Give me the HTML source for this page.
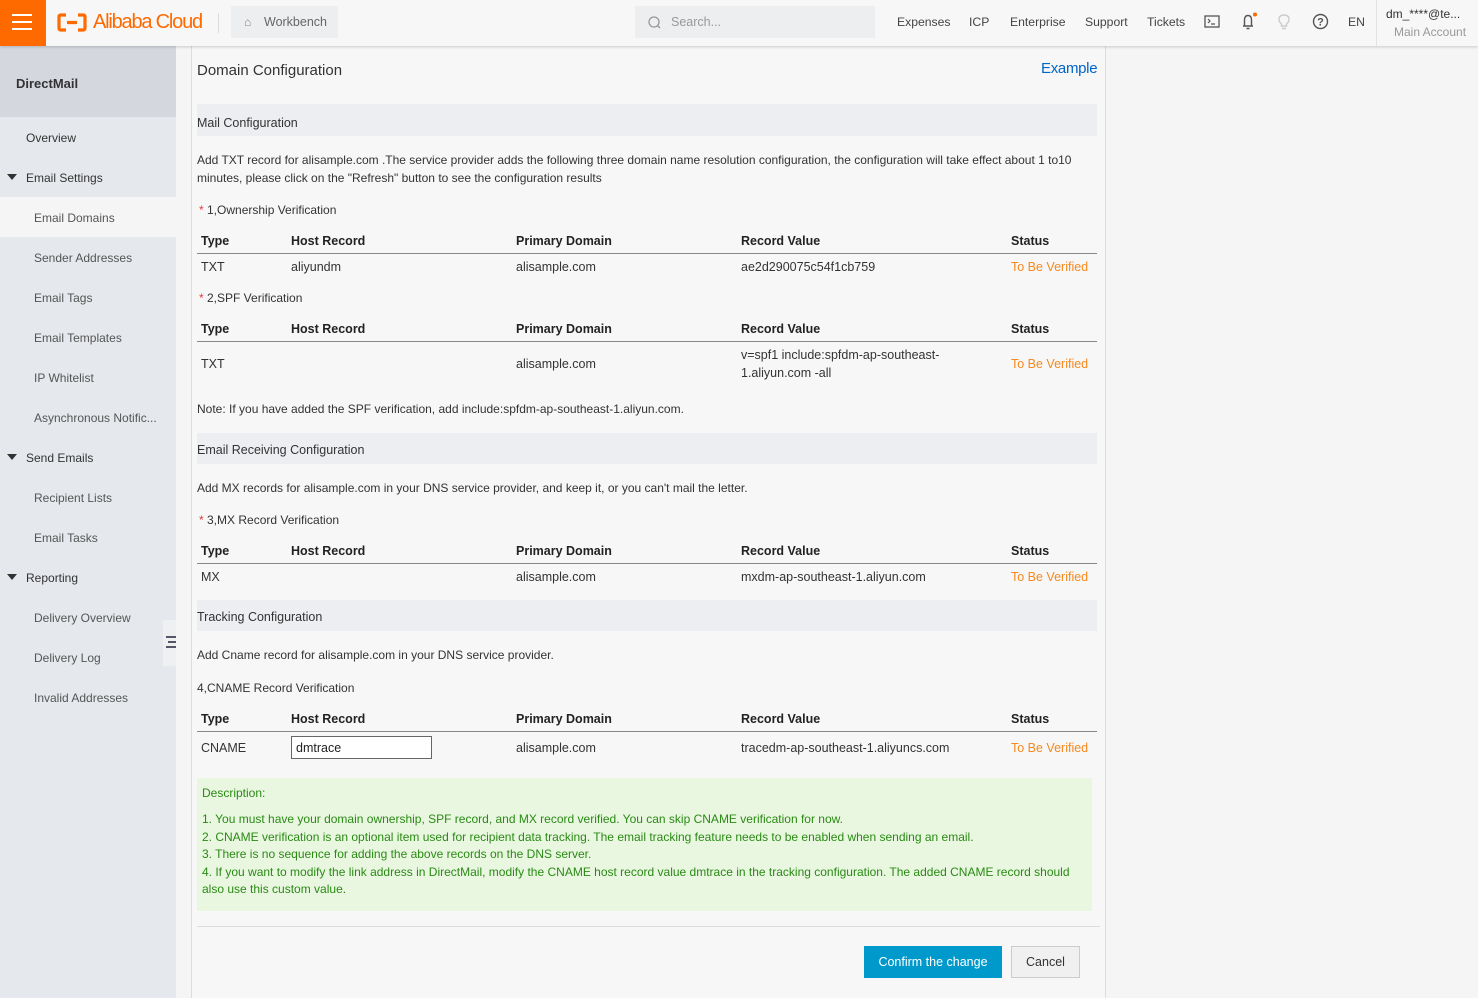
<!DOCTYPE html>
<html><head><meta charset="utf-8"><style>
*{box-sizing:border-box;margin:0;padding:0}
body{width:1478px;height:998px;overflow:hidden;background:#f5f5f5;font-family:"Liberation Sans",Arial,sans-serif;color:#333;position:relative}
.a{position:absolute;white-space:nowrap}
.top{position:absolute;left:0;top:0;width:1478px;height:46px;background:#f7f7f7;box-shadow:0 1px 3px rgba(0,0,0,.18);z-index:2}
.nav{font-size:12.2px;color:#444;top:15px}
.side{position:absolute;left:0;top:46px;width:176px;height:952px;background:#e5e8ec}
.si{position:absolute;left:0;width:176px;height:40px;font-size:12px;line-height:42px;color:#555}
.main{position:absolute;left:191px;top:46px;width:915px;height:952px;background:#f7f7f7;border-left:1px solid #ddd;border-right:1px solid #ddd}
.t{font-size:12px;color:#333;margin-top:1px}
.h{font-size:12.5px;font-weight:bold;color:#222;margin-top:1px}
.band{position:absolute;left:197px;width:900px;background:#eceef1;font-size:12.5px;color:#333;padding-left:0}
.line{position:absolute;left:197px;width:900px;height:1px;background:#888}
.st{color:#f6891f;font-size:12.5px;margin-top:1px}
.red{color:#e4393c}
.tri{position:absolute;left:7px;top:17px;width:0;height:0;border-left:5px solid transparent;border-right:5px solid transparent;border-top:6px solid #333}
</style></head><body>
<div class="top">
  <div class="a" style="left:0;top:0;width:46px;height:46px;background:#ff6a00">
    <div class="a" style="left:12px;top:14px;width:20px;height:2px;background:#fff"></div>
    <div class="a" style="left:12px;top:21px;width:20px;height:2px;background:#fff"></div>
    <div class="a" style="left:12px;top:28px;width:20px;height:2px;background:#fff"></div>
  </div>
  <svg class="a" style="left:57px;top:13px" width="30" height="19" viewBox="0 0 30 19"><path d="M9 2H4Q2 2 2 4V15Q2 17 4 17H9M21 2H26Q28 2 28 4V15Q28 17 26 17H21M10 9.5H20" stroke="#ff6a00" stroke-width="3.2" fill="none"/></svg>
  <div class="a" style="left:93px;top:11px;font-size:20px;color:#ff6a00;letter-spacing:-1.2px;font-weight:500">Alibaba Cloud</div>
  <div class="a" style="left:218px;top:13px;width:1px;height:20px;background:#ddd"></div>
  <div class="a" style="left:231px;top:6px;width:107px;height:32px;background:#eceef0"></div>
  <div class="a" style="left:244px;top:15px;font-size:12px;color:#888">⌂</div>
  <div class="a" style="left:264px;top:15px;font-size:12.5px;color:#666">Workbench</div>
  <div class="a" style="left:635px;top:6px;width:240px;height:32px;background:#eceef0"></div>
  <svg class="a" style="left:647px;top:15px" width="15" height="15"><circle cx="7" cy="7" r="5" stroke="#999" stroke-width="1.3" fill="none"/><path d="M10.5 10.5L13 13" stroke="#999" stroke-width="1.3"/></svg>
  <div class="a" style="left:671px;top:15px;font-size:12.5px;color:#999">Search...</div>
  <div class="a nav" style="left:897px">Expenses</div>
  <div class="a nav" style="left:969px">ICP</div>
  <div class="a nav" style="left:1010px">Enterprise</div>
  <div class="a nav" style="left:1085px">Support</div>
  <div class="a nav" style="left:1147px">Tickets</div>
  <svg class="a" style="left:1204px;top:15px" width="16" height="14"><rect x="1" y="1" width="14" height="11" stroke="#555" stroke-width="1.3" fill="none"/><path d="M4 4L6 6L4 8M7 9H11" stroke="#555" stroke-width="1.2" fill="none"/></svg>
  <svg class="a" style="left:1240px;top:12px" width="18" height="19"><path d="M3 14H13M4.5 14V8Q4.5 3.5 8 3.5Q11.5 3.5 11.5 8V14M6.5 16.5H9.5" stroke="#555" stroke-width="1.4" fill="none"/><circle cx="15" cy="2.5" r="2" fill="#ff6a00"/></svg>
  <svg class="a" style="left:1277px;top:13px" width="14" height="18"><path d="M4.5 11Q2 9 2 6.5Q2 2 7 2Q12 2 12 6.5Q12 9 9.5 11V13H4.5Z M5 15.5H9" stroke="#ccc" stroke-width="1.4" fill="none"/></svg>
  <svg class="a" style="left:1312px;top:13px" width="17" height="17"><circle cx="8.5" cy="8.5" r="7" stroke="#555" stroke-width="1.4" fill="none"/><text x="8.5" y="12.5" font-size="11" font-weight="bold" text-anchor="middle" fill="#555" font-family="Liberation Sans">?</text></svg>
  <div class="a nav" style="left:1348px">EN</div>
  <div class="a" style="left:1376px;top:0;width:1px;height:46px;background:#e3e3e3"></div>
  <div class="a" style="left:1386px;top:7px;font-size:12px;color:#333">dm_****@te...</div>
  <div class="a" style="left:1394px;top:25px;font-size:12px;color:#999">Main Account</div>
</div>

<div class="side">
  <div class="a" style="left:0;top:0;width:176px;height:71px;background:#d4d8de"></div>
  <div class="a" style="left:16px;top:30px;font-size:13px;font-weight:bold;color:#333">DirectMail</div>
  <div class="si" style="top:71px;padding-left:26px;color:#333">Overview</div>
  <div class="si" style="top:111px;padding-left:26px;color:#333"><span class="tri"></span>Email Settings</div>
  <div class="si" style="top:151px;padding-left:34px;background:#f5f5f5">Email Domains</div>
  <div class="si" style="top:191px;padding-left:34px">Sender Addresses</div>
  <div class="si" style="top:231px;padding-left:34px">Email Tags</div>
  <div class="si" style="top:271px;padding-left:34px">Email Templates</div>
  <div class="si" style="top:311px;padding-left:34px">IP Whitelist</div>
  <div class="si" style="top:351px;padding-left:34px">Asynchronous Notific...</div>
  <div class="si" style="top:391px;padding-left:26px;color:#333"><span class="tri"></span>Send Emails</div>
  <div class="si" style="top:431px;padding-left:34px">Recipient Lists</div>
  <div class="si" style="top:471px;padding-left:34px">Email Tasks</div>
  <div class="si" style="top:511px;padding-left:26px;color:#333"><span class="tri"></span>Reporting</div>
  <div class="si" style="top:551px;padding-left:34px">Delivery Overview</div>
  <div class="si" style="top:591px;padding-left:34px">Delivery Log</div>
  <div class="si" style="top:631px;padding-left:34px">Invalid Addresses</div>
</div>
<div class="a" style="left:163px;top:620px;width:13px;height:46px;background:#eef0f2"></div>
<div class="a" style="left:166px;top:636px;width:10px;height:2px;background:#556"></div>
<div class="a" style="left:168px;top:641px;width:8px;height:2px;background:#556"></div>
<div class="a" style="left:166px;top:646px;width:10px;height:2px;background:#556"></div>

<div class="main"></div>
<div class="a" style="left:197px;top:62px;font-size:15px;color:#333">Domain Configuration</div>
<div class="a" style="left:1041px;top:60px;font-size:15px;color:#0064c8;letter-spacing:-0.3px">Example</div>

<div class="band" style="top:104px;height:32px;line-height:38px">Mail Configuration</div>
<div class="a t" style="left:197px;top:152px">Add TXT record for alisample.com .The service provider adds the following three domain name resolution configuration, the configuration will take effect about 1 to10</div>
<div class="a t" style="left:197px;top:170px">minutes, please click on the "Refresh" button to see the configuration results</div>
<div class="a t" style="left:199px;top:202px"><span class="red">*</span> 1,Ownership Verification</div>

<div class="a h" style="left:201px;top:233px">Type</div><div class="a h" style="left:291px;top:233px">Host Record</div><div class="a h" style="left:516px;top:233px">Primary Domain</div><div class="a h" style="left:741px;top:233px">Record Value</div><div class="a h" style="left:1011px;top:233px">Status</div>
<div class="line" style="top:253px"></div>
<div class="a t" style="left:201px;top:259px;font-size:12.5px">TXT</div><div class="a t" style="left:291px;top:259px;font-size:12.5px">aliyundm</div><div class="a t" style="left:516px;top:259px;font-size:12.5px">alisample.com</div><div class="a t" style="left:741px;top:259px;font-size:12.5px">ae2d290075c54f1cb759</div><div class="a st" style="left:1011px;top:259px">To Be Verified</div>

<div class="a t" style="left:199px;top:290px"><span class="red">*</span> 2,SPF Verification</div>
<div class="a h" style="left:201px;top:321px">Type</div><div class="a h" style="left:291px;top:321px">Host Record</div><div class="a h" style="left:516px;top:321px">Primary Domain</div><div class="a h" style="left:741px;top:321px">Record Value</div><div class="a h" style="left:1011px;top:321px">Status</div>
<div class="line" style="top:341px"></div>
<div class="a t" style="left:201px;top:356px;font-size:12.5px">TXT</div><div class="a t" style="left:516px;top:356px;font-size:12.5px">alisample.com</div>
<div class="a t" style="left:741px;top:347px;font-size:12.5px">v=spf1 include:spfdm-ap-southeast-</div>
<div class="a t" style="left:741px;top:365px;font-size:12.5px">1.aliyun.com -all</div>
<div class="a st" style="left:1011px;top:356px">To Be Verified</div>
<div class="a t" style="left:197px;top:401px">Note: If you have added the SPF verification, add include:spfdm-ap-southeast-1.aliyun.com.</div>

<div class="band" style="top:433px;height:31px;line-height:35px">Email Receiving Configuration</div>
<div class="a t" style="left:197px;top:480px">Add MX records for alisample.com in your DNS service provider, and keep it, or you can't mail the letter.</div>
<div class="a t" style="left:199px;top:512px"><span class="red">*</span> 3,MX Record Verification</div>
<div class="a h" style="left:201px;top:543px">Type</div><div class="a h" style="left:291px;top:543px">Host Record</div><div class="a h" style="left:516px;top:543px">Primary Domain</div><div class="a h" style="left:741px;top:543px">Record Value</div><div class="a h" style="left:1011px;top:543px">Status</div>
<div class="line" style="top:563px"></div>
<div class="a t" style="left:201px;top:569px;font-size:12.5px">MX</div><div class="a t" style="left:516px;top:569px;font-size:12.5px">alisample.com</div><div class="a t" style="left:741px;top:569px;font-size:12.5px">mxdm-ap-southeast-1.aliyun.com</div><div class="a st" style="left:1011px;top:569px">To Be Verified</div>

<div class="band" style="top:600px;height:31px;line-height:35px">Tracking Configuration</div>
<div class="a t" style="left:197px;top:647px">Add Cname record for alisample.com in your DNS service provider.</div>
<div class="a t" style="left:197px;top:680px">4,CNAME Record Verification</div>
<div class="a h" style="left:201px;top:711px">Type</div><div class="a h" style="left:291px;top:711px">Host Record</div><div class="a h" style="left:516px;top:711px">Primary Domain</div><div class="a h" style="left:741px;top:711px">Record Value</div><div class="a h" style="left:1011px;top:711px">Status</div>
<div class="line" style="top:731px"></div>
<div class="a t" style="left:201px;top:740px;font-size:12.5px">CNAME</div>
<div class="a" style="left:291px;top:736px;width:141px;height:23px;border:1px solid #666;background:#fff;font-size:12.5px;padding:4px 4px;color:#222">dmtrace</div>
<div class="a t" style="left:516px;top:740px;font-size:12.5px">alisample.com</div><div class="a t" style="left:741px;top:740px;font-size:12.5px">tracedm-ap-southeast-1.aliyuncs.com</div><div class="a st" style="left:1011px;top:740px">To Be Verified</div>

<div class="a" style="left:197px;top:778px;width:895px;height:133px;background:#e9f7e1"></div>
<div class="a" style="left:202px;top:785px;font-size:12px;color:#2a8a14;line-height:17.4px;white-space:normal;width:880px">Description:<br><div style="height:9px"></div>1. You must have your domain ownership, SPF record, and MX record verified. You can skip CNAME verification for now.<br>2. CNAME verification is an optional item used for recipient data tracking. The email tracking feature needs to be enabled when sending an email.<br>3. There is no sequence for adding the above records on the DNS server.<br>4. If you want to modify the link address in DirectMail, modify the CNAME host record value dmtrace in the tracking configuration. The added CNAME record should also use this custom value.</div>

<div class="a" style="left:197px;top:926px;width:903px;height:1px;background:#ddd"></div>
<div class="a" style="left:864px;top:946px;width:138px;height:32px;background:#0099cc;color:#fff;font-size:12.5px;text-align:center;line-height:33px">Confirm the change</div>
<div class="a" style="left:1011px;top:946px;width:69px;height:32px;background:#f0f0f0;border:1px solid #ccc;color:#333;font-size:12.5px;text-align:center;line-height:31px">Cancel</div>
</body></html>
